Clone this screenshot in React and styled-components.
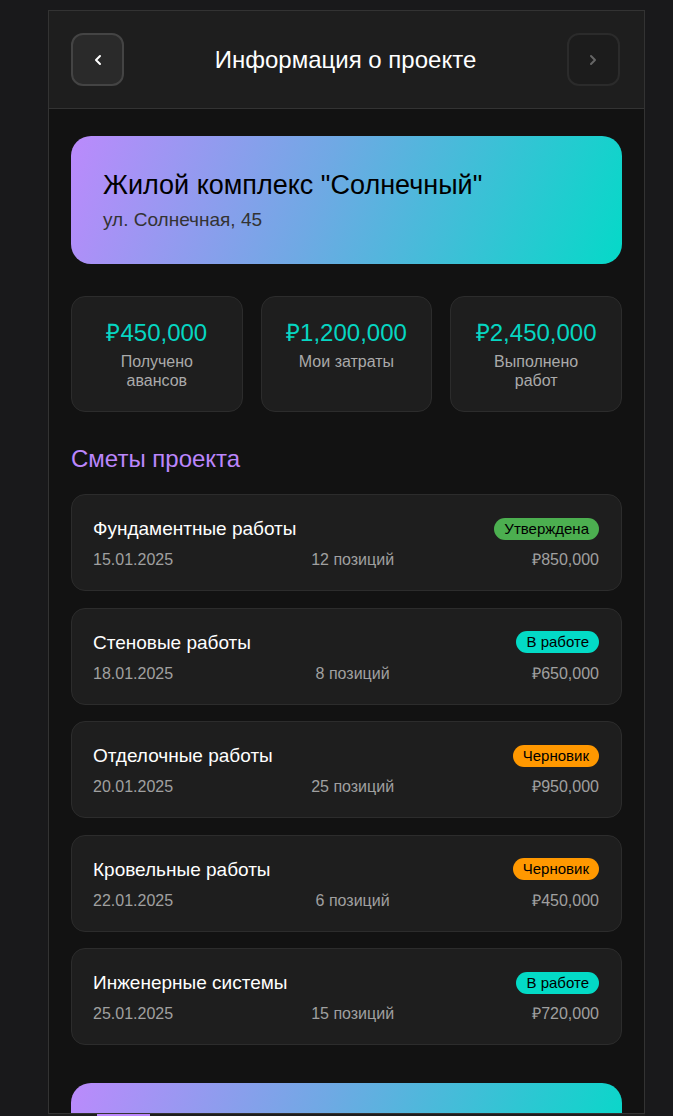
import React from "react";
import styled, { createGlobalStyle } from "styled-components";

const Global = createGlobalStyle`
  html, body {
    margin: 0;
    padding: 0;
    overflow: hidden;
    background: #19191b;
    font-family: "Liberation Sans", Arial, sans-serif;
  }
`;

const Screen = styled.div`
  width: 597px;
  margin: 10px 0 0 48px;
  box-sizing: border-box;
  border: 1px solid #333;
  background: #121212;
  min-height: 1200px;
`;

const Header = styled.header`
  height: 98px;
  box-sizing: border-box;
  background: #1e1e1e;
  border-bottom: 1px solid #333;
  display: flex;
  align-items: center;
  justify-content: space-between;
  padding: 0 24px 0 22px;
`;

const NavButton = styled.button`
  width: 53px;
  height: 53px;
  box-sizing: border-box;
  border-radius: 12px;
  border: 2px solid ${(p) => (p.disabled ? "#2b2b2b" : "#444")};
  background: ${(p) => (p.disabled ? "#1c1c1c" : "#2a2a2a")};
  color: ${(p) => (p.disabled ? "#666" : "#fff")};
  display: flex;
  align-items: center;
  justify-content: center;
  padding: 0;
`;

const Title = styled.h1`
  margin: 0;
  font-size: 24px;
  font-weight: normal;
  color: #fff;
`;

const Content = styled.main`
  padding: 27px 22px 0;
  display: flex;
  flex-direction: column;
`;

const Hero = styled.section`
  border-radius: 20px;
  background: linear-gradient(110deg, #bb8afc 0%, #6fa9e4 45%, #05d9c8 100%);
  padding: 33px 32px 33px;
`;

const HeroTitle = styled.h2`
  margin: 0;
  font-size: 27px;
  line-height: 32px;
  font-weight: normal;
  color: #000;
`;

const HeroAddress = styled.div`
  margin-top: 7px;
  font-size: 19px;
  line-height: 23px;
  color: #333;
`;

const Stats = styled.div`
  margin-top: 32px;
  display: grid;
  grid-template-columns: repeat(3, 1fr);
  gap: 18px;
`;

const StatCard = styled.div`
  background: #1e1e1e;
  border: 1px solid #2c2c2c;
  border-radius: 14px;
  padding: 21px 20px 21px;
  text-align: center;
  box-sizing: border-box;
`;

const StatValue = styled.div`
  font-size: 24px;
  line-height: 29px;
  color: #06d6c2;
`;

const StatLabel = styled.div`
  margin-top: 5px;
  font-size: 16px;
  line-height: 19px;
  color: #aaa;
`;

const SectionTitle = styled.h3`
  margin: 32px 0 21px;
  font-size: 24px;
  line-height: 29px;
  font-weight: normal;
  color: #bb86fc;
`;

const List = styled.div`
  display: flex;
  flex-direction: column;
  gap: 16.5px;
`;

const EstimateCard = styled.div`
  background: #1e1e1e;
  border: 1px solid #2c2c2c;
  border-radius: 14px;
  padding: 22px 22px 21px 21px;
`;

const Row = styled.div`
  display: flex;
  align-items: center;
  justify-content: space-between;
  margin-top: ${(p) => (p.$meta ? "10px" : "0")};
  font-size: ${(p) => (p.$meta ? "16px" : "19px")};
  line-height: ${(p) => (p.$meta ? "19px" : "23px")};
  color: ${(p) => (p.$meta ? "#a0a0a0" : "#fff")};
`;

const badgeColors = {
  approved: "#4caf50",
  progress: "#03dac6",
  draft: "#ff9800",
};

const Badge = styled.span`
  background: ${(p) => badgeColors[p.$kind]};
  color: #000;
  font-size: 15px;
  line-height: 18px;
  padding: 2px 10px;
  border-radius: 12px;
`;

const ActionCard = styled.div`
  margin-top: 38px;
  border-radius: 20px;
  background: linear-gradient(110deg, #bb8afc 0%, #6fa9e4 45%, #05d9c8 100%);
  padding: 29px 32px;
  display: flex;
  align-items: center;
  justify-content: center;
  gap: 12px;
  font-size: 22px;
  color: #000;
`;

const ActionIcon = styled.span`
  color: #9b59d0;
  font-size: 22px;
`;

const BottomBar = styled.nav`
  position: fixed;
  top: 1113px;
  left: 48px;
  width: 597px;
  height: 60px;
  box-sizing: border-box;
  background: #1e1e1e;
  border-top: 1px solid #333;
  display: flex;
  padding-left: 49px;
`;

const BarIndicator = styled.div`
  width: 53px;
  height: 4px;
  background: #bb86fc;
`;

const Chevron = ({ dir }) => (
  <svg width="10" height="12" viewBox="0 0 10 12" fill="none">
    <polyline
      points={dir === "left" ? "7,2 3,6 7,10" : "3,2 7,6 3,10"}
      stroke="currentColor"
      strokeWidth="2"
      strokeLinecap="round"
      strokeLinejoin="round"
    />
  </svg>
);

const estimates = [
  { name: "Фундаментные работы", date: "15.01.2025", count: "12 позиций", sum: "₽850,000", status: "Утверждена", kind: "approved" },
  { name: "Стеновые работы", date: "18.01.2025", count: "8 позиций", sum: "₽650,000", status: "В работе", kind: "progress" },
  { name: "Отделочные работы", date: "20.01.2025", count: "25 позиций", sum: "₽950,000", status: "Черновик", kind: "draft" },
  { name: "Кровельные работы", date: "22.01.2025", count: "6 позиций", sum: "₽450,000", status: "Черновик", kind: "draft" },
  { name: "Инженерные системы", date: "25.01.2025", count: "15 позиций", sum: "₽720,000", status: "В работе", kind: "progress" },
];

const stats = [
  { value: "₽450,000", label: "Получено авансов" },
  { value: "₽1,200,000", label: "Мои затраты" },
  { value: "₽2,450,000", label: "Выполнено работ" },
];

const App = () => {
  return (
    <>
      <Global />
      <Screen>
        <Header>
          <NavButton aria-label="Назад">
            <Chevron dir="left" />
          </NavButton>
          <Title>Информация о проекте</Title>
          <NavButton disabled aria-label="Вперёд">
            <Chevron dir="right" />
          </NavButton>
        </Header>
        <Content>
          <Hero>
            <HeroTitle>Жилой комплекс "Солнечный"</HeroTitle>
            <HeroAddress>ул. Солнечная, 45</HeroAddress>
          </Hero>
          <Stats>
            {stats.map((s) => (
              <StatCard key={s.label}>
                <StatValue>{s.value}</StatValue>
                <StatLabel>{s.label}</StatLabel>
              </StatCard>
            ))}
          </Stats>
          <SectionTitle>Сметы проекта</SectionTitle>
          <List>
            {estimates.map((e) => (
              <EstimateCard key={e.name}>
                <Row>
                  <span>{e.name}</span>
                  <Badge $kind={e.kind}>{e.status}</Badge>
                </Row>
                <Row $meta>
                  <span>{e.date}</span>
                  <span>{e.count}</span>
                  <span>{e.sum}</span>
                </Row>
              </EstimateCard>
            ))}
          </List>
          <ActionCard>
            <ActionIcon>✦</ActionIcon>
            <span>Создать смету</span>
          </ActionCard>
        </Content>
      </Screen>
      <BottomBar>
        <BarIndicator />
      </BottomBar>
    </>
  );
};

export default App;
